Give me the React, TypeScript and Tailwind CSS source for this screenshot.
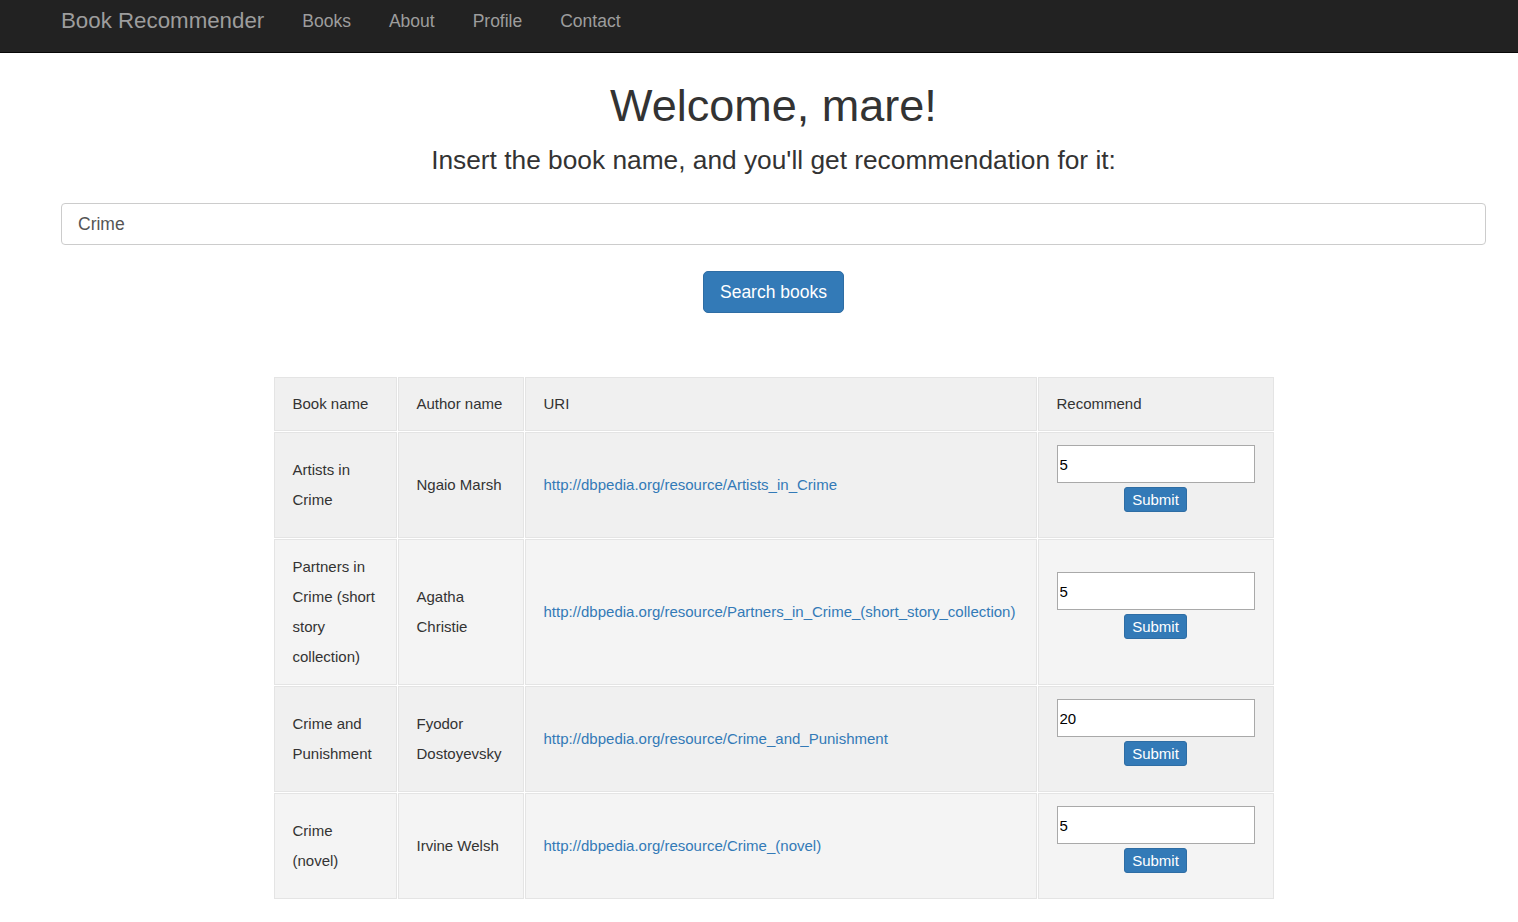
import React from "react";

const books = [
  {
    name: "Artists in Crime",
    author: "Ngaio Marsh",
    uri: "http://dbpedia.org/resource/Artists_in_Crime",
    value: "5",
    bg: "bg-[#f0f0f0]",
  },
  {
    name: "Partners in Crime (short story collection)",
    author: "Agatha Christie",
    uri: "http://dbpedia.org/resource/Partners_in_Crime_(short_story_collection)",
    value: "5",
    bg: "bg-[#f4f4f4]",
  },
  {
    name: "Crime and Punishment",
    author: "Fyodor Dostoyevsky",
    uri: "http://dbpedia.org/resource/Crime_and_Punishment",
    value: "20",
    bg: "bg-[#f0f0f0]",
  },
  {
    name: "Crime (novel)",
    author: "Irvine Welsh",
    uri: "http://dbpedia.org/resource/Crime_(novel)",
    value: "5",
    bg: "bg-[#f4f4f4]",
  },
];

const Navbar = () => {
  return (
    <nav className="h-[53px] bg-[#222] border-b border-[#080808]">
      <div className="flex items-start pl-[61px]">
        <a className="text-[22.3px] leading-[42px] text-[#9d9d9d]">Book Recommender</a>
        <div className="flex ml-[38px] gap-[38px]">
          <a className="text-[17.5px] leading-[42px] text-[#9d9d9d]">Books</a>
          <a className="text-[17.5px] leading-[42px] text-[#9d9d9d]">About</a>
          <a className="text-[17.5px] leading-[42px] text-[#9d9d9d]">Profile</a>
          <a className="text-[17.5px] leading-[42px] text-[#9d9d9d]">Contact</a>
        </div>
      </div>
    </nav>
  );
};

const BookRow = ({ book }: { book: (typeof books)[number] }) => {
  return (
    <tr className={book.bg}>
      <td className="border border-[#e4e4e4] px-[18px] py-[12px] align-middle">{book.name}</td>
      <td className="border border-[#e4e4e4] px-[18px] py-[12px] align-middle">{book.author}</td>
      <td className="border border-[#e4e4e4] px-[18px] py-[12px] align-middle">
        <a className="text-[#337ab7]">{book.uri}</a>
      </td>
      <td className="border border-[#e4e4e4] px-[18px] py-[12px] align-middle">
        <div className="flex flex-col items-center mb-[13px]">
          <input
            defaultValue={book.value}
            className="w-full h-[38px] border border-[#a9a9a9] bg-white px-[2px] text-[15px] text-black outline-none"
          />
          <button className="mt-[4px] h-[25px] px-[7px] rounded-[3px] bg-[#337ab7] border border-[#2e6da4] text-white text-[15px] leading-[20px]">
            Submit
          </button>
        </div>
      </td>
    </tr>
  );
};

export default function App() {
  return (
    <div className="min-h-[922px] bg-white text-[#333] font-['Liberation_Sans',Arial,sans-serif]">
      <Navbar />
      <div className="pl-[61px] pr-[32px]">
        <h1 className="mt-[29px] text-center text-[45px] leading-[48px]">Welcome, mare!</h1>
        <h3 className="mt-[17px] text-center text-[26.3px] leading-[26px]">
          Insert the book name, and you'll get recommendation for it:
        </h3>
        <input
          defaultValue="Crime"
          className="mt-[30px] block w-full h-[42px] rounded-[4px] border border-[#ccc] px-[16px] text-[17.5px] text-[#555] outline-none"
        />
        <div className="flex justify-center mt-[26px]">
          <button className="h-[42px] px-[16px] rounded-[5px] bg-[#337ab7] border border-[#2e6da4] text-white text-[17.5px]">
            Search books
          </button>
        </div>
        <table className="mt-[63px] mx-auto w-[997px] table-fixed border-separate border-spacing-[1px] text-[15px] leading-[30px]">
          <thead>
            <tr className="bg-[#f0f0f0]">
              <th className="w-[123px] border border-[#e4e4e4] px-[18px] py-[11px] text-left font-normal">Book name</th>
              <th className="w-[126px] border border-[#e4e4e4] px-[18px] py-[11px] text-left font-normal">Author name</th>
              <th className="w-[512px] border border-[#e4e4e4] px-[18px] py-[11px] text-left font-normal">URI</th>
              <th className="w-[236px] border border-[#e4e4e4] px-[18px] py-[11px] text-left font-normal">Recommend</th>
            </tr>
          </thead>
          <tbody>
            {books.map((b) => (
              <BookRow key={b.uri} book={b} />
            ))}
          </tbody>
        </table>
      </div>
    </div>
  );
}
